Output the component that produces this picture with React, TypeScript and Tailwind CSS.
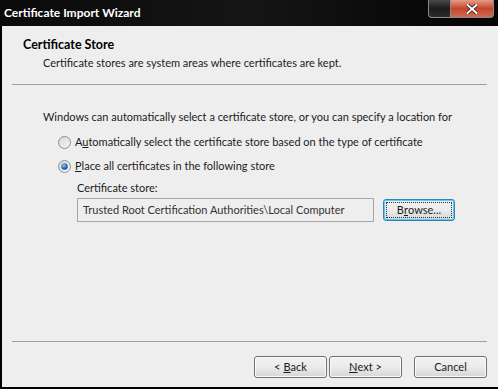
import React from "react";

const font = { fontFamily: "Lato, 'Liberation Sans', sans-serif" };

function Radio({ checked }: { checked: boolean }) {
  return (
    <svg width="13" height="13" viewBox="0 0 13 13" className="shrink-0">
      <defs>
        <linearGradient id={checked ? "rgc" : "rgu"} x1="0" y1="0" x2="1" y2="1">
          <stop offset="0" stopColor="#d4d4d4" />
          <stop offset="1" stopColor="#f8f8f8" />
        </linearGradient>
        <radialGradient id="dot" cx="0.4" cy="0.35" r="0.7">
          <stop offset="0" stopColor="#9fd3f7" />
          <stop offset="0.5" stopColor="#2b7fc6" />
          <stop offset="1" stopColor="#0d3e78" />
        </radialGradient>
      </defs>
      <circle cx="6.5" cy="6.5" r="6" fill={`url(#${checked ? "rgc" : "rgu"})`} stroke="#8e8f8f" strokeWidth="1" />
      {checked && <circle cx="6.5" cy="6.5" r="3.2" fill="url(#dot)" />}
    </svg>
  );
}

function Btn({ children, focused, className = "" }: { children: React.ReactNode; focused?: boolean; className?: string }) {
  return (
    <div
      className={`flex items-center justify-center rounded-[3px] border bg-gradient-to-b from-[#f2f2f2] via-[#ebebeb] to-[#d6d6d6] text-[11px] text-[#1a1a1a] ${
        focused ? "border-[#3c7fb1] shadow-[inset_0_0_0_1px_#48d0ff]" : "border-[#707070] shadow-[inset_0_0_0_1px_#fcfcfc]"
      } ${className}`}
    >
      {focused ? (
        <span className="flex items-center justify-center w-[calc(100%-6px)] h-[calc(100%-6px)] outline outline-1 outline-dotted outline-[#333]">
          {children}
        </span>
      ) : (
        children
      )}
    </div>
  );
}

export default function App() {
  return (
    <div className="w-[498px] h-[389px] flex flex-col bg-black overflow-hidden" style={font}>
      {/* title bar */}
      <div className="h-[26px] shrink-0 relative bg-gradient-to-r from-[#0a0a0a] via-[#151515] to-[#050505] flex items-center">
        <span className="pl-[4px] text-white font-bold text-[12px] leading-none">Certificate Import Wizard</span>
        <div className="absolute top-0 right-[4px] flex h-[18px]">
          <div className="w-[23px] h-[18px] rounded-bl-[4px] border border-t-0 border-[#8a8a8a] bg-gradient-to-b from-[#4a4a4a] via-[#1c1c1c] to-[#2c2c2c]" />
          <div className="w-[43px] h-[18px] rounded-br-[4px] border border-t-0 border-l-0 border-[#8a8a8a] bg-gradient-to-b from-[#e59a86] via-[#c4452c] to-[#d06a4c] flex items-center justify-center">
            <svg width="12" height="10" viewBox="0 0 12 10">
              <path d="M1.5 1 L10.5 9 M10.5 1 L1.5 9" stroke="#3a1a12" strokeWidth="3.6" strokeLinecap="square" />
              <path d="M1.5 1 L10.5 9 M10.5 1 L1.5 9" stroke="#ffffff" strokeWidth="2" strokeLinecap="square" />
            </svg>
          </div>
        </div>
      </div>

      {/* body */}
      <div className="flex-1 flex flex-col bg-[#eeeeee] ml-[2px] mb-[2px] text-[11px] text-[#1c1c1c]">
        <div className="mt-[11px] pl-[21px] font-bold text-[12.5px] leading-[16px] text-black">Certificate Store</div>
        <div className="mt-[2px] pl-[41px] leading-[16px]">
          Certificate stores are system areas where certificates are kept.
        </div>
        <div className="mt-[13px] ml-[10px] w-[475px] h-px bg-[#a0a0a0]" />

        <div className="mt-[24px] pl-[41px] leading-[16px]">
          Windows can automatically select a certificate store, or you can specify a location for
        </div>
        <div className="mt-[9px] pl-[56px] flex items-center h-[16px]">
          <Radio checked={false} />
          <span className="ml-[4px]">
            A<span className="underline">u</span>tomatically select the certificate store based on the type of certificate
          </span>
        </div>
        <div className="mt-[8px] pl-[56px] flex items-center h-[16px]">
          <Radio checked={true} />
          <span className="ml-[4px]">
            <span className="underline">P</span>lace all certificates in the following store
          </span>
        </div>
        <div className="mt-[6px] pl-[75px] leading-[16px]">Certificate store:</div>
        <div className="mt-[2px] pl-[75px] flex items-center">
          <div className="w-[297px] h-[24px] border border-[#a7a7a7] bg-[#eeeeee] flex items-center pl-[5px] text-[#333]">
            Trusted Root Certification Authorities\Local Computer
          </div>
          <Btn focused className="ml-[9px] w-[72px] h-[22px]">
            B<span className="underline">r</span>owse...
          </Btn>
        </div>

        <div className="mt-auto ml-[10px] w-[475px] h-px bg-[#a0a0a0]" />
        <div className="mt-[14px] mb-[9px] flex justify-end pr-[11px]">
          <Btn className="w-[73px] h-[22px]">
            &lt; <span className="underline ml-[3px]">B</span>ack
          </Btn>
          <Btn className="ml-[2px] w-[73px] h-[22px]">
            <span className="underline">N</span>ext &gt;
          </Btn>
          <Btn className="ml-[12px] w-[73px] h-[22px]">Cancel</Btn>
        </div>
      </div>
    </div>
  );
}
